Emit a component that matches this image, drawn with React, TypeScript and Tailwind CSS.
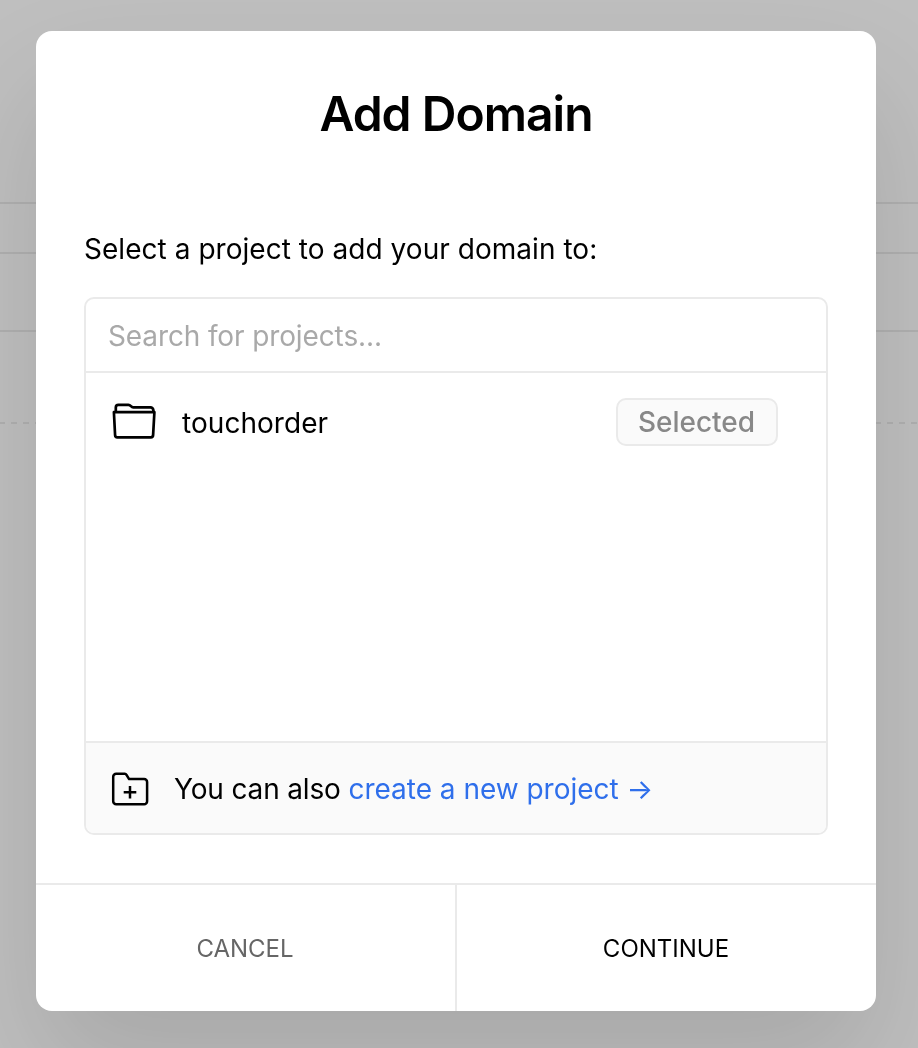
import { useState } from "react";

function FolderIcon() {
  return (
    <svg
      className="mb-0.5 h-[42px] w-12"
      viewBox="110 400 48 42"
      fill="none"
      stroke="#000"
      strokeWidth="2.7"
      strokeLinecap="round"
      strokeLinejoin="round"
    >
      <path d="M115.8 411.5v-4a2.6 2.6 0 0 1 2.6-2.6h10c2.6 0 2.4 2.5 4.8 2.5h17.2a3 3 0 0 1 3 3v1.1" />
      <path d="M113.9 412.2h40.5l-1.3 23a2.2 2.2 0 0 1-2.2 2.1h-33.6a2.2 2.2 0 0 1-2.2-2.1z" />
    </svg>
  );
}

function FolderPlusIcon() {
  return (
    <svg
      className="mt-0.5 h-9 w-10"
      viewBox="110 771 40 36"
      fill="none"
      stroke="#000"
      strokeWidth="2.5"
      strokeLinejoin="round"
    >
      <path d="M113.2 801.2v-24.4a3 3 0 0 1 3-3h8.6a2 2 0 0 1 1.7 1l2.6 4.3h15a3 3 0 0 1 3 3v19.1a3 3 0 0 1-3 3h-27.9a3 3 0 0 1-3-3z" />
      <path d="M130 786v12.6M123.7 792.3h12.6" />
    </svg>
  );
}

export default function App() {
  const [search, setSearch] = useState("");

  return (
    <div className="relative h-[1048px] w-[918px] overflow-hidden bg-[#bfbfbf] font-[Inter,sans-serif] text-[28px] text-black antialiased">
      {/* page behind the modal */}
      <div className="pt-[202px]">
        <div className="h-0.5 bg-[#b0b0b0]" />
        <div className="mt-12 h-0.5 bg-[#b0b0b0]" />
        <div className="mt-[76px] h-0.5 bg-[#b0b0b0]" />
        <div className="mt-[90px] h-0.5 bg-[repeating-linear-gradient(90deg,#b0b0b0_0_5px,transparent_5px_11px,#b0b0b0_11px_12px)]" />
      </div>

      {/* modal */}
      <div className="absolute top-[31px] left-9 flex h-[980px] w-[840px] flex-col overflow-hidden rounded-2xl bg-white shadow-[0_60px_120px_rgba(0,0,0,0.12)] will-change-transform">
        <div className="flex-1 px-12 pt-[53px]">
          <h1 className="text-center text-[48px] leading-[60px] font-semibold tracking-[-0.02em]">
            Add Domain
          </h1>
          <p className="mt-[85px] leading-10 tracking-[0.04px]">
            Select a project to add your domain to:
          </p>

          <div className="mt-7 flex h-[538px] flex-col overflow-hidden rounded-[10px] border-2 border-[#eaeaea]">
            <input
              className="h-[74px] shrink-0 border-b-2 border-[#eaeaea] px-[22px] pt-0.5 tracking-[-0.12px] outline-none placeholder:text-[#a9a9a9]"
              placeholder="Search for projects..."
              value={search}
              onChange={(e) => setSearch(e.target.value)}
            />

            <div className="flex-1">
              <div className="flex h-[98px] items-center pr-12 pl-6">
                <FolderIcon />
                <span className="mt-0.5 ml-6 tracking-[0.05px]">touchorder</span>
                <span className="ml-auto flex h-12 w-[162px] items-center justify-center rounded-[10px] border-2 border-[#eaeaea] bg-[#fafafa] pr-px font-medium text-[#888]">
                  Selected
                </span>
              </div>
            </div>

            <div className="flex h-[92px] shrink-0 items-center border-t-2 border-[#eaeaea] bg-[#fafafa] pl-6">
              <FolderPlusIcon />
              <p className="mt-0.5 ml-6 tracking-[-0.15px] whitespace-pre">
                You can also{" "}
                <a className="tracking-[-0.02px] text-[#2f6feb]">
                  create a new project →
                </a>
              </p>
            </div>
          </div>
        </div>

        <div className="flex h-32 shrink-0 border-t-2 border-[#eaeaea] text-2xl">
          <button className="w-[421px] border-r-2 border-[#eaeaea] pt-0.5 pr-px text-[#666]">
            CANCEL
          </button>
          <button className="flex-1 pt-0.5 pr-px">CONTINUE</button>
        </div>
      </div>
    </div>
  );
}
